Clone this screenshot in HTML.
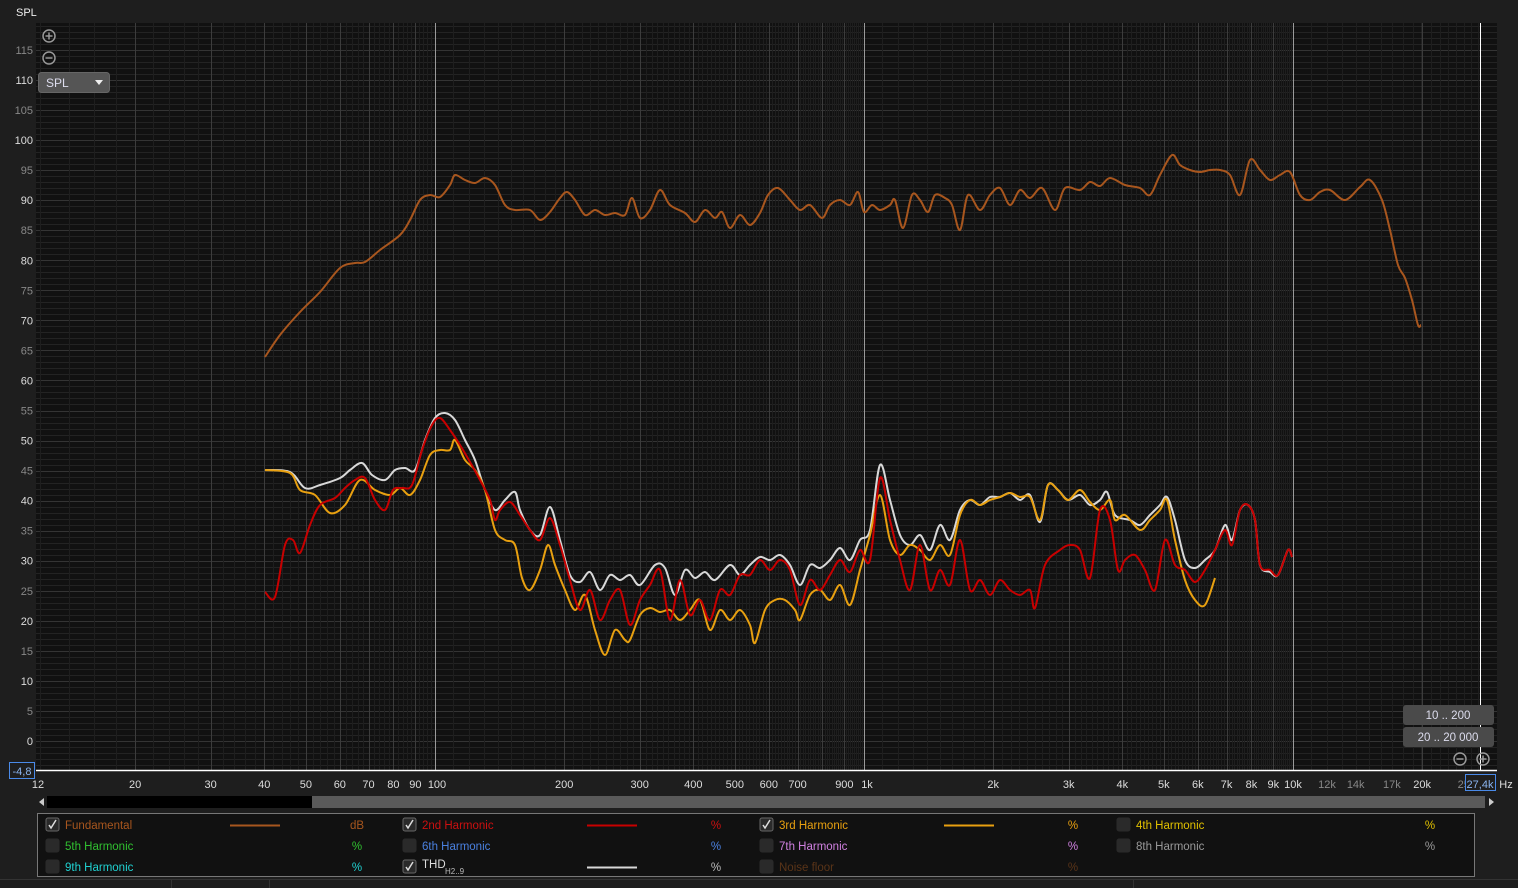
<!DOCTYPE html>
<html><head><meta charset="utf-8"><style>
body{margin:0;width:1518px;height:888px;background:#1e1e1e;overflow:hidden;font-family:"Liberation Sans",sans-serif;}
svg{position:absolute;left:0;top:0}
</style></head><body>
<svg id="s" width="1518" height="888" viewBox="0 0 1518 888" font-family="Liberation Sans, sans-serif">
<rect x="0" y="0" width="1518" height="888" fill="#1e1e1e"/>
<rect x="36" y="23" width="1461" height="747" fill="#111"/>
<g id="grid"></g>
<g id="curves" fill="none" stroke-width="2" stroke-linejoin="round"></g>
<line x1="1480.5" y1="23" x2="1480.5" y2="770" stroke="#fff" stroke-width="1"/>
<line x1="36" y1="770.5" x2="1497" y2="770.5" stroke="#fff" stroke-width="1.5"/>
<text x="16" y="16" fill="#eee" font-size="11">SPL</text>
<g id="ylab" font-size="11" text-anchor="end"></g>
<g id="xlab" font-size="11" text-anchor="middle"></g>
<!-- zoom icons -->
<g stroke="#999" stroke-width="1.5" fill="none">
<circle cx="49" cy="36" r="6"/><line x1="45.5" y1="36" x2="52.5" y2="36"/><line x1="49" y1="32.5" x2="49" y2="39.5"/>
<circle cx="49" cy="58" r="6"/><line x1="45.5" y1="58" x2="52.5" y2="58"/>
<circle cx="1460" cy="759" r="6"/><line x1="1456.5" y1="759" x2="1463.5" y2="759"/>
<circle cx="1483" cy="759" r="6"/><line x1="1479.5" y1="759" x2="1486.5" y2="759"/><line x1="1483" y1="755.5" x2="1483" y2="762.5"/>
</g>
<rect x="38.5" y="72.5" width="71" height="20" rx="3" fill="#555" stroke="#666"/>
<text x="46" y="87" fill="#dde" font-size="12">SPL</text>
<path d="M95 80 L103 80 L99 85 Z" fill="#eee"/>
<rect x="1403" y="705" width="91" height="20" rx="3" fill="#4a4a4a"/>
<text x="1448" y="719" fill="#dde" font-size="11.5" text-anchor="middle">10 .. 200</text>
<rect x="1403" y="727" width="91" height="20" rx="3" fill="#4a4a4a"/>
<text x="1448" y="741" fill="#dde" font-size="11.5" text-anchor="middle">20 .. 20 000</text>
<rect x="9.5" y="762.5" width="25" height="16" fill="#1e1e1e" stroke="#4a8ae8"/>
<text x="22" y="775" fill="#8ab4f0" font-size="11" text-anchor="middle">-4,8</text>
<!-- scrollbar -->
<rect x="47" y="796" width="265" height="12" fill="#000"/>
<rect x="312" y="796" width="1173" height="12" fill="#5a5a5a"/>
<path d="M44 798 L39 802 L44 806 Z" fill="#ccc"/>
<path d="M1489 798 L1494 802 L1489 806 Z" fill="#ccc"/>
<!-- legend -->
<rect x="37.5" y="813.5" width="1437" height="63" fill="#111" stroke="#777"/>
<g id="leg" font-size="11.5"></g>
<line x1="0" y1="879.5" x2="1518" y2="879.5" stroke="#333"/>
<line x1="171.5" y1="880" x2="171.5" y2="888" stroke="#333"/>
<line x1="269.5" y1="880" x2="269.5" y2="888" stroke="#333"/>
<line x1="1133.5" y1="880" x2="1133.5" y2="888" stroke="#333"/>
</svg>
<script>
const NS="http://www.w3.org/2000/svg";
function el(p,t,a,txt){const e=document.createElementNS(NS,t);for(const k in a)e.setAttribute(k,a[k]);if(txt!==undefined)e.textContent=txt;p.appendChild(e);return e;}
const X=f=>435+429*Math.log10(f/100), Y=v=>741-6.009*v;
const g=document.getElementById('grid');
for(let v=-4;v<=119;v++){const y=Math.round(Y(v))+.5;el(g,'line',{x1:36,x2:1497,y1:y,y2:y,stroke:v%5==0?'#343434':'#232323'});}
// vertical minor
for(let d=10;d<=10000;d*=10){for(let m=1;m<10;m+=(d>=100?0.1:(d>=10?0.2:0.5))){const f=d*m;if(f<12||f>28000)continue;const x=Math.round(X(f))+.5;el(g,'line',{x1:x,x2:x,y1:23,y2:770,stroke:'#1e1e1e'});}}
for(let d=10;d<=10000;d*=10){for(let m=1;m<10;m++){const f=d*m;if(f<12||f>28000)continue;const x=Math.round(X(f))+.5;const c=(m==1&&d>=100)?'#9a9a9a':'#3c3c3c';el(g,'line',{x1:x,x2:x,y1:23,y2:770,stroke:c});}}
el(g,'line',{x1:X(20000),x2:X(20000),y1:23,y2:770,stroke:'#3c3c3c'});
const yl=document.getElementById('ylab');
for(let v=0;v<=115;v+=5)el(yl,'text',{x:33,y:Y(v)+4,fill:v%10==0?'#ddd':'#888'},String(v));
const xl=document.getElementById('xlab');
[[12,'12'],[20,'20'],[30,'30'],[40,'40'],[50,'50'],[60,'60'],[70,'70'],[80,'80'],[90,'90'],[100,'100'],[200,'200'],[300,'300'],[400,'400'],[500,'500'],[600,'600'],[700,'700'],[900,'900'],[1000,'1k'],[2000,'2k'],[3000,'3k'],[4000,'4k'],[5000,'5k'],[6000,'6k'],[7000,'7k'],[8000,'8k'],[9000,'9k'],[10000,'10k'],[12000,'12k',1],[14000,'14k',1],[17000,'17k',1],[20000,'20k'],[25000,'25',1]].forEach(a=>{let x=X(a[0]);if(a[0]==12)x=38;if(a[0]==100)x=437;if(a[0]==1000)x=867;el(xl,'text',{x:x,y:788,fill:a[2]?'#888':'#ddd'},a[1]);});
el(xl,'rect',{x:1465.5,y:774.5,width:30,height:16,fill:'#1e1e1e',stroke:'#4a8ae8'});
el(xl,'text',{x:1480,y:788,fill:'#8ab4f0'},'27,4k');
el(xl,'text',{x:1506,y:788,fill:'#ddd'},'Hz');
function path(pts){let d='M'+pts[0][0]+' '+pts[0][1];for(let i=0;i<pts.length-1;i++){const p0=pts[i-1]||pts[i],p1=pts[i],p2=pts[i+1],p3=pts[i+2]||p2;const c1=[p1[0]+(p2[0]-p0[0])/6,p1[1]+(p2[1]-p0[1])/6],c2=[p2[0]-(p3[0]-p1[0])/6,p2[1]-(p3[1]-p1[1])/6];d+=`C${c1[0].toFixed(1)} ${c1[1].toFixed(1)} ${c2[0].toFixed(1)} ${c2[1].toFixed(1)} ${p2[0]} ${p2[1]}`;}return d;}
function P(s){const a=s.split(',').map(Number),r=[];for(let i=0;i<a.length;i+=2)r.push([a[i],a[i+1]]);return r;}
const fund=P("265,357,280,335,300,312,320,292,340,268,355,263,365,262,380,250,400,235,410,220,420,200,430,195,440,197,450,185,455,175,465,180,475,183,485,178,495,185,505,205,515,210,530,210,540,220,550,212,560,198,567,192,575,200,585,215,595,210,605,215,615,213,625,215,632,198,640,218,650,210,660,190,670,205,685,213,695,222,705,210,715,218,722,212,730,228,740,215,750,225,760,213,768,195,778,188,790,200,800,210,810,205,822,218,830,205,840,200,850,205,858,192,864,212,872,205,880,210,890,205,895,200,903,228,912,195,920,200,928,212,935,195,945,198,952,205,960,230,968,195,980,210,990,195,1000,188,1010,205,1020,190,1030,198,1042,188,1055,210,1065,188,1080,190,1090,182,1100,186,1110,178,1125,185,1140,188,1150,195,1160,175,1172,155,1180,165,1190,170,1200,172,1210,170,1220,170,1230,175,1240,195,1250,160,1260,170,1270,180,1280,175,1290,172,1300,195,1310,200,1320,192,1330,190,1345,200,1360,187,1370,180,1382,200,1390,230,1398,265,1405,278,1412,300,1418,325,1421,325");
const thd=P("265,470,290,472,305,488,320,485,340,478,350,470,362,463,372,475,385,480,395,470,405,468,415,470,425,440,435,418,445,413,455,420,465,440,475,460,485,490,495,510,505,500,515,492,520,510,530,530,540,535,550,507,560,540,570,575,580,582,590,572,600,590,610,575,620,580,630,575,640,585,655,565,665,568,675,595,685,570,695,578,705,572,715,580,730,565,740,575,750,565,760,557,770,560,780,555,790,565,800,585,810,565,820,568,830,560,840,548,850,560,860,540,870,530,880,465,890,500,900,535,910,545,920,535,930,550,940,525,950,540,960,510,970,500,980,505,990,497,1000,497,1010,493,1020,500,1030,495,1040,522,1048,485,1058,490,1068,500,1080,495,1090,505,1100,500,1107,492,1115,515,1130,520,1140,525,1150,515,1160,505,1167,497,1175,520,1185,560,1195,568,1205,560,1215,550,1225,525,1232,540,1240,510,1248,505,1255,520,1260,565,1270,572,1278,575,1288,550,1292,557");
const h2=P("265,592,275,597,285,545,293,540,300,553,310,525,320,505,335,498,345,488,355,480,365,478,375,500,385,510,393,490,402,488,412,485,422,450,432,425,440,418,450,430,460,445,470,462,480,480,490,500,495,520,500,510,510,502,520,515,530,530,540,540,550,518,560,545,570,580,580,610,590,590,600,620,610,600,620,590,630,625,640,600,650,585,660,570,670,620,680,580,690,615,700,600,710,620,720,590,730,595,740,575,750,575,760,560,770,570,780,560,790,570,800,605,810,580,820,590,830,575,840,560,850,572,860,550,870,560,880,478,890,520,900,560,910,590,920,545,930,590,940,570,950,585,960,540,970,590,980,580,990,595,1000,580,1010,590,1020,595,1030,590,1035,608,1045,565,1060,550,1070,545,1080,550,1090,578,1100,510,1110,520,1118,570,1125,560,1135,555,1145,570,1155,590,1165,540,1175,565,1185,570,1195,582,1205,570,1215,550,1225,530,1232,545,1240,510,1248,505,1255,520,1260,565,1270,570,1278,575,1288,550,1292,557");
const h3=P("265,470,290,473,300,490,315,495,330,513,345,505,360,480,375,490,390,495,400,488,410,495,420,480,430,455,440,450,450,450,455,440,465,460,475,470,485,490,495,530,505,540,515,545,522,578,530,590,540,570,548,545,555,565,565,590,575,610,585,595,595,630,605,655,615,630,625,640,630,640,640,615,650,608,660,612,670,610,680,620,690,610,700,600,710,630,720,610,730,620,740,610,750,625,755,643,765,610,775,600,785,600,795,610,800,620,810,595,820,590,830,600,840,585,850,605,860,570,870,535,880,495,890,540,900,555,910,545,920,550,930,560,940,545,950,555,960,515,970,500,980,505,990,500,1000,497,1010,493,1020,497,1030,497,1040,520,1048,485,1058,490,1068,500,1080,490,1090,502,1100,510,1110,500,1115,520,1125,515,1140,530,1150,520,1160,510,1167,500,1175,540,1185,580,1195,600,1205,605,1215,578");
const cv=document.getElementById('curves');
el(cv,'path',{d:path(fund),stroke:'#a8561e'});
el(cv,'path',{d:path(thd),stroke:'#d8d8d8'});
el(cv,'path',{d:path(h3),stroke:'#e8a010'});
el(cv,'path',{d:path(h2),stroke:'#c80000'});
const lg=document.getElementById('leg');
const rows=[825,846,867],cols=[[52,65,357],[409,422,716],[766,779,1073],[1123,1136,1430]];
const items=[
[0,0,1,'Fundamental','#a8561e','dB','#a8561e','#a8561e'],
[0,1,1,'2nd Harmonic','#cc1010','%','#cc1010','#c80000'],
[0,2,1,'3rd Harmonic','#e8a010','%','#e8a010','#e8a010'],
[0,3,0,'4th Harmonic','#e0c000','%','#e0c000'],
[1,0,0,'5th Harmonic','#30c030','%','#30c030'],
[1,1,0,'6th Harmonic','#4a80e0','%','#4a80e0'],
[1,2,0,'7th Harmonic','#d080e0','%','#d080e0'],
[1,3,0,'8th Harmonic','#999','%','#999'],
[2,0,0,'9th Harmonic','#20d0d0','%','#20d0d0'],
[2,1,1,'THD','#ddd','%','#bbb','#d8d8d8'],
[2,2,0,'Noise floor','#5a3418','%','#5a3418']];
items.forEach(it=>{const y=rows[it[0]],c=cols[it[1]];
el(lg,'rect',{x:c[0]-6,y:y-7,width:13,height:13,rx:2,fill:'#2a2a2a',stroke:it[2]?'#666':'#2a2a2a'});
if(it[2])el(lg,'path',{d:`M${c[0]-3} ${y} L${c[0]-1} ${y+3} L${c[0]+4} ${y-5}`,stroke:'#ddd','stroke-width':1.5,fill:'none'});
const t=el(lg,'text',{x:c[1],y:y+4,fill:it[4]},it[3]);
if(it[3]=='THD'){t.setAttribute('y',y+1);el(lg,'text',{x:c[1]+23,y:y+7,fill:'#bbb','font-size':8},'H2..9');}
el(lg,'text',{x:c[2],y:y+4,fill:it[6],'text-anchor':'middle'},it[5]);
if(it[7])el(lg,'line',{x1:c[1]+165,x2:c[1]+215,y1:y+.5,y2:y+.5,stroke:it[7],'stroke-width':2});
});
</script>
</body></html>
